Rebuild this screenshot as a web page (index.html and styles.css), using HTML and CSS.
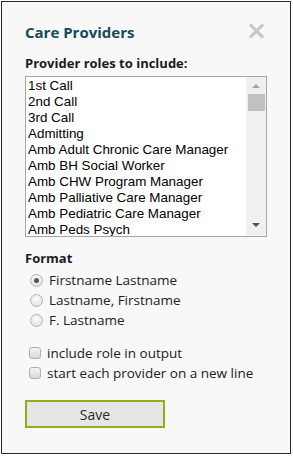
FILE: index.html
```html
<!DOCTYPE html>
<html lang="en">
  <head>
    <meta charset="UTF-8" />
    <meta name="viewport" content="width=device-width, initial-scale=1.0" />
    <title>Care Providers</title>
    <link rel="stylesheet" href="styles.css">
  </head>
  <body>
    <div class="dialog">
      <header>
        <h2>Care Providers</h2>
        <button class="close" title="Close">
          <svg width="15" height="16" viewBox="0 0 15 16"><path d="M2 2.5 L13 13.5 M13 2.5 L2 13.5" stroke="#c9c9c9" stroke-width="3.2" stroke-linecap="square"/></svg>
        </button>
      </header>
      <label class="field-label">Provider roles to include:</label>
      <div class="listbox">
        <ul class="options">
          <li>1st Call</li>
          <li>2nd Call</li>
          <li>3rd Call</li>
          <li>Admitting</li>
          <li>Amb Adult Chronic Care Manager</li>
          <li>Amb BH Social Worker</li>
          <li>Amb CHW Program Manager</li>
          <li>Amb Palliative Care Manager</li>
          <li>Amb Pediatric Care Manager</li>
          <li>Amb Peds Psych</li>
        </ul>
        <div class="scrollbar">
          <span class="arrow up"></span>
          <span class="thumb"></span>
          <span class="track"></span>
          <span class="arrow down"></span>
        </div>
      </div>
      <div class="section-label">Format</div>
      <div class="choices">
        <label class="choice"><span class="radio checked"></span>Firstname Lastname</label>
        <label class="choice"><span class="radio"></span>Lastname, Firstname</label>
        <label class="choice"><span class="radio"></span>F. Lastname</label>
      </div>
      <div class="checks">
        <label class="choice"><span class="check"></span>include role in output</label>
        <label class="choice"><span class="check"></span>start each provider on a new line</label>
      </div>
      <button class="save">Save</button>
    </div>
  </body>
</html>
```

FILE: styles.css
```css
* {
  margin: 0;
  padding: 0;
  box-sizing: border-box;
}
body {
  background-color: #fff;
  font-family: 'Open Sans', sans-serif;
  color: #222;
}
.dialog {
  margin: 1px;
  width: 290px;
  height: 453px;
  border: 1px solid #2a2a2a;
  background-color: #f8f8f8;
  padding: 20px 22px 0 23px;
}
header {
  display: flex;
  justify-content: space-between;
  align-items: flex-start;
}
header h2 {
  font-size: 15px;
  line-height: 20px;
  font-weight: 700;
  color: #174a5c;
}
.close {
  border: none;
  background: none;
  width: 15px;
  height: 16px;
  margin: 1px 4px 0 0;
  display: flex;
}
.field-label {
  display: block;
  margin-top: 12px;
  font-size: 13px;
  line-height: 18px;
  font-weight: 700;
  color: #1e1a22;
}
.listbox {
  margin-top: 4px;
  width: 242px;
  height: 161px;
  border: 1px solid #a6a6a6;
  background-color: #fff;
  display: flex;
  overflow: hidden;
}
.options {
  list-style: none;
  flex: 1;
  padding: 1px 0 0 2px;
  font-family: 'Liberation Sans', Arial, sans-serif;
  font-size: 13.4px;
  line-height: 16px;
  color: #000;
}
.scrollbar {
  width: 20px;
  background-color: #f0f0f0;
  display: flex;
  flex-direction: column;
  align-items: center;
}
.arrow {
  width: 0;
  height: 0;
  border-left: 4px solid transparent;
  border-right: 4px solid transparent;
}
.arrow.up {
  margin-top: 7px;
  border-bottom: 4px solid #a3a3a3;
}
.arrow.down {
  margin-bottom: 9px;
  border-top: 4px solid #505050;
}
.thumb {
  margin-top: 6px;
  width: 17px;
  height: 17px;
  background-color: #c1c1c1;
}
.track {
  flex: 1;
}
.section-label {
  margin-top: 12px;
  font-size: 13px;
  line-height: 18px;
  font-weight: 700;
  color: #1e1a22;
}
.choices {
  margin-top: 3px;
  display: flex;
  flex-direction: column;
}
.checks {
  margin-top: 13px;
  display: flex;
  flex-direction: column;
}
.choice {
  display: flex;
  align-items: center;
  gap: 6px;
  font-size: 13.5px;
  line-height: 20px;
  color: #222;
}
.radio {
  margin-left: 5px;
  width: 13px;
  height: 13px;
  border-radius: 50%;
  border: 1px solid #b4b4b4;
  background: radial-gradient(circle at 50% 35%, #fdfdfd, #dcdcdc);
  display: flex;
  align-items: center;
  justify-content: center;
}
.radio.checked::after {
  content: '';
  width: 5px;
  height: 5px;
  border-radius: 50%;
  background-color: #555;
}
.check {
  margin-left: 4px;
  width: 12px;
  height: 12px;
  border-radius: 3px;
  border: 1px solid #b0b0b0;
  background: linear-gradient(#f4f4f4, #d8d8d8);
}
.save {
  margin-top: 17px;
  width: 140px;
  height: 28px;
  border: 2px solid #8fae1b;
  background-color: #e6e6e6;
  font-family: 'Open Sans', sans-serif;
  font-size: 14px;
  color: #2a2a2a;
}
```
